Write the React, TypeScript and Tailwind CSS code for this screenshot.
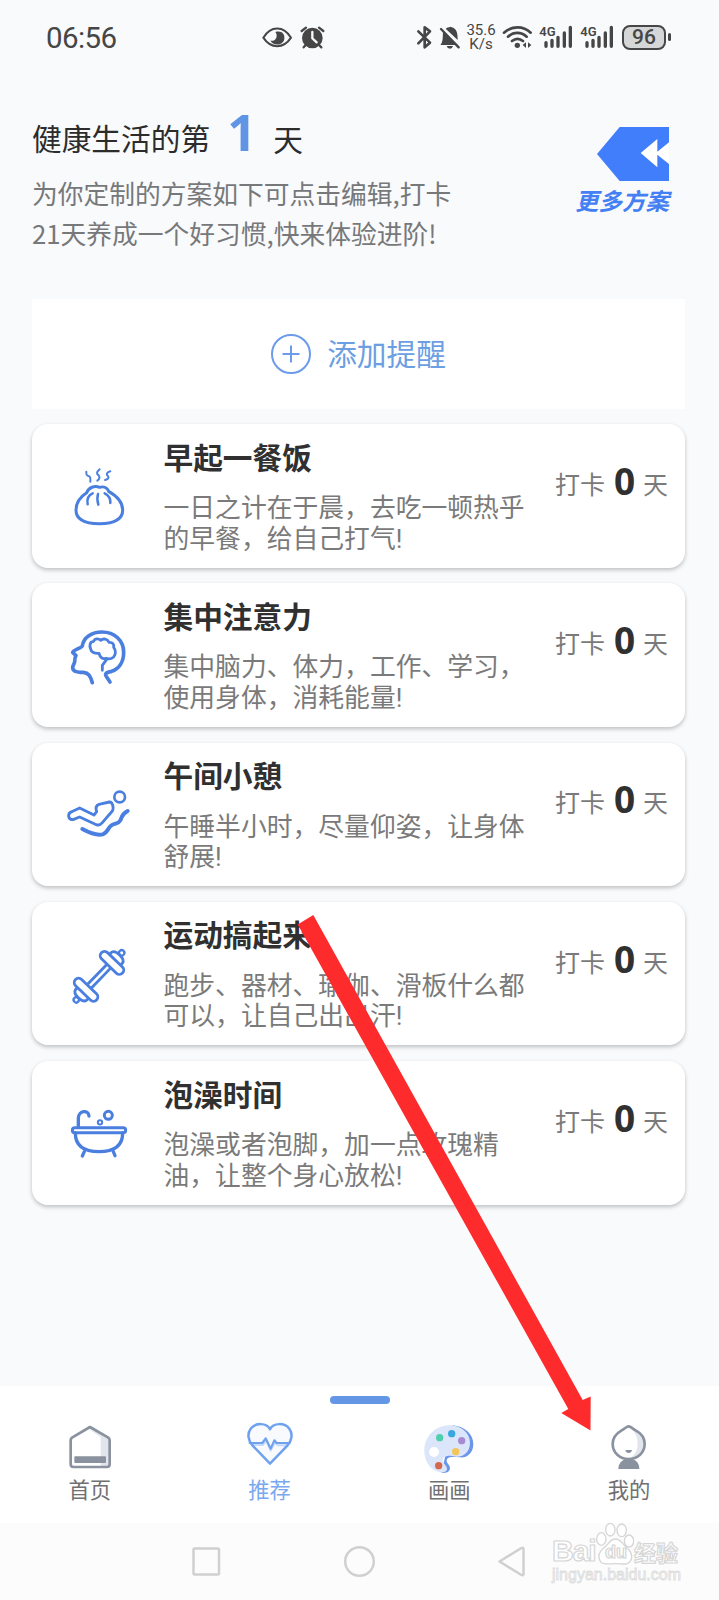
import type { ReactNode } from "react";

const plans = [
  {
    title: "早起一餐饭",
    lines: ["一日之计在于晨，去吃一顿热乎", "的早餐，给自己打气!"],
    days: 0,
    icon: <BunIcon />,
  },
  {
    title: "集中注意力",
    lines: ["集中脑力、体力，工作、学习，", "使用身体，消耗能量!"],
    days: 0,
    icon: <BrainIcon />,
  },
  {
    title: "午间小憩",
    lines: ["午睡半小时，尽量仰姿，让身体", "舒展!"],
    days: 0,
    icon: <NapIcon />,
  },
  {
    title: "运动搞起来",
    lines: ["跑步、器材、瑜伽、滑板什么都", "可以，让自己出出汗!"],
    days: 0,
    icon: <DumbbellIcon />,
  },
  {
    title: "泡澡时间",
    lines: ["泡澡或者泡脚，加一点玫瑰精", "油，让整个身心放松!"],
    days: 0,
    icon: <BathIcon />,
  },
];

const tabs = [
  { label: "首页", icon: <HomeIcon />, active: false },
  { label: "推荐", icon: <HeartIcon />, active: true },
  { label: "画画", icon: <PaletteIcon />, active: false },
  { label: "我的", icon: <ProfileIcon />, active: false },
];

function PlanIcon({ viewBox, children }: { viewBox: string; children: ReactNode }) {
  return (
    <svg
      className="h-16 w-16 shrink-0"
      viewBox={viewBox}
      fill="none"
      stroke="#4a7fe0"
      strokeWidth="9"
      strokeLinecap="round"
      strokeLinejoin="round"
    >
      {children}
    </svg>
  );
}

function BunIcon() {
  return (
    <PlanIcon viewBox="201 552 192 192">
      <path d="M260 638C238 652 228 670 228 690C228 718 252 731 298 731C344 731 368 718 368 690C368 670 354 650 326 634C322 624 312 618 299 622C284 616 266 622 260 638Z" />
      <path d="M278 640C264 646 260 658 263 673M294 642C291 652 292 664 295 674M314 640C326 646 332 656 331 669" strokeWidth="7.500" />
      <path d="M259 575C258 588 262 587 268 589C273 592 271 598 271 605M299 568C288 577 290 582 296 586C300 591 299 597 292 602M331 574C319 577 318 584 324 588C328 594 323 598 315 600" strokeWidth="6" />
    </PlanIcon>
  );
}

function BrainIcon() {
  return (
    <PlanIcon viewBox="81 39 192 192">
      <path d="M157 218C151 196 145 189 130 187C113 187 98 184 98 173C98 167 103 162 104 155C104 148 104 142 108 137L98 127C97 121 124 114 127 108C130 82 156 66 186 66C224 66 251 92 251 127C251 157 236 177 215 184C195 188 194 193 200 201L210 216" strokeWidth="11" />
      <path d="M177 130C164 131 153 126 152 117C148 107 149 95 160 95C165 84 176 85 182 91C190 84 203 87 207 97C218 96 223 103 221 112C228 120 228 134 221 141C213 148 203 147 198 145C189 148 180 145 177 130ZM200 148L187 166V181" strokeWidth="8.500" />
    </PlanIcon>
  );
}

function NapIcon() {
  return (
    <PlanIcon viewBox="81 37 192 192">
      <circle cx="239" cy="82" r="16" strokeWidth="8" />
      <path d="M170 126L162 136L119 115L95 126C81 132 84 150 99 150L119 142L169 165C176 168 182 165 187 159L217 124C222 115 218 96 208 97L177 104C168 107 166 114 170 126Z" strokeWidth="8.500" />
      <path d="M127 178C151 191 171 198 188 194C206 188 202 173 216 166C228 160 235 163 241 152C247 141 244 134 263 124" strokeWidth="12" />
    </PlanIcon>
  );
}

function DumbbellIcon() {
  return (
    <PlanIcon viewBox="81 35 192 192">
      <g transform="translate(177 138) rotate(-46)" strokeWidth="8.500">
        <path d="M-42 -8H42M-42 8H42" />
        <path d="M-68 -23H-78C-93 -20 -93 20 -78 23H-68M68 -23H78C93 -20 93 20 78 23H68" />
        <rect x="-69" y="-44" width="26" height="88" rx="13" fill="#fff" />
        <rect x="43" y="-44" width="26" height="88" rx="13" fill="#fff" />
        <circle cx="-98" cy="0" r="8" strokeWidth="7" />
        <circle cx="98" cy="0" r="8" strokeWidth="7" />
      </g>
    </PlanIcon>
  );
}

function BathIcon() {
  return (
    <PlanIcon viewBox="81 32 192 192">
      <rect x="97" y="112" width="160" height="15" rx="7.500" />
      <path d="M106 128C106 166 132 184 177 184C222 184 248 166 248 128M115 108V84C115 59 147 58 147 77M133 184L127 197M220 184L225 196" strokeWidth="10" />
      <circle cx="205" cy="75" r="12" />
      <circle cx="180" cy="96" r="6.500" strokeWidth="6" />
    </PlanIcon>
  );
}

function HomeIcon() {
  return (
    <svg className="h-[54px] w-[54px]" viewBox="187 150 162 162" fill="none">
      <path d="M300 188L327 207V288H300Z" fill="#e2e6ec" />
      <path d="M260 173L268 173L300 193V202Z" fill="#e2e6ec" />
      <path d="M268 171L323 203Q327 206 327 211V283Q327 291 319 291H218Q210 291 210 283V211Q210 206 214 203Z" stroke="#8a929f" strokeWidth="8" strokeLinejoin="round" />
      <rect x="221" y="259" width="95" height="20" rx="3" fill="#8a929f" />
    </svg>
  );
}

function HeartIcon() {
  return (
    <svg className="h-[54px] w-[54px]" viewBox="728 150 162 162" fill="none" strokeLinejoin="round" strokeLinecap="round">
      <path d="M809 178C799 157 765 158 751 176C740 191 743 211 757 227L809 281L861 227C875 211 878 191 867 176C853 158 819 157 809 178Z" fill="#f8fafe" />
      <path d="M754 225H788L797 211L811 242L824 217L832 226H861" stroke="#c6dafa" strokeWidth="6" />
      <path d="M809 178C799 157 765 158 751 176C740 191 743 211 757 227L809 281L861 227C875 211 878 191 867 176C853 158 819 157 809 178Z" stroke="#6fa1ef" strokeWidth="7.500" />
      <path d="M748 219H786L796 205L811 236L822 211L829 219H868" stroke="#6fa1ef" strokeWidth="6.500" />
    </svg>
  );
}

function PaletteIcon() {
  return (
    <svg className="h-[54px] w-[54px]" viewBox="188 150 162 162">
      <path d="M280 166C318 170 342 192 342 224C341 250 322 265 300 262C280 258 264 261 262 270C261 280 272 284 272 295C271 306 260 311 246 308Z" fill="#6c96e8" />
      <path d="M268 166C300 164 331 185 332 218C332 246 313 260 292 260C272 255 253 256 250 269C249 281 264 286 263 298C261 309 246 309 233 304C209 295 194 270 195 239C197 196 230 167 268 166Z" fill="#dbe6fb" />
      <circle cx="224" cy="246" r="15" fill="#fff" />
      <circle cx="241" cy="203" r="11" fill="#4fcfae" />
      <circle cx="277" cy="191" r="11" fill="#38a7dd" />
      <circle cx="307" cy="212" r="11" fill="#a78bd2" />
      <circle cx="289" cy="245" r="11" fill="#f3c558" />
      <circle cx="238" cy="287" r="11" fill="#d4694d" />
    </svg>
  );
}

function ProfileIcon() {
  return (
    <svg className="h-[54px] w-[54px]" viewBox="725 150 162 162" fill="none">
      <path d="M774 297C774 281 785 270 796 267H815C828 270 837 281 837 297Z" fill="#8a929f" />
      <path d="M805 169C811 169 816 175 826 181C843 190 853 204 853 222C853 248 832 267 805 267C778 267 757 248 757 222C757 204 768 190 784 181C795 175 799 169 805 169Z" fill="#fff" />
      <path d="M807 172C826 188 832 202 832 220C832 244 823 257 808 264C834 266 851 246 851 222C851 195 831 187 807 172Z" fill="#e2e6ec" />
      <path d="M805 169C811 169 816 175 826 181C843 190 853 204 853 222C853 248 832 267 805 267C778 267 757 248 757 222C757 204 768 190 784 181C795 175 799 169 805 169Z" stroke="#8a929f" strokeWidth="8" />
      <path d="M795 240H815Q813 249 805 249Q797 249 795 240Z" fill="#8a929f" />
    </svg>
  );
}

function Signal() {
  return (
    <svg className="h-[26px] w-[34px]" viewBox="537 72 102 78">
      <text x="538" y="109" fontFamily="Roboto, sans-serif" fontSize="41" fontWeight="600" fill="#464646" textLength="49" lengthAdjust="spacingAndGlyphs">4G</text>
      <g stroke="#464646" strokeWidth="10" strokeLinecap="round">
        <path d="M558 128V139M576 121V139M594 112V139M613 99V139M631 82V139" />
      </g>
    </svg>
  );
}

function StatusBar() {
  return (
    <div className="flex h-[74px] items-center pl-[46px] text-[#464646]">
      <span className="w-[216px] translate-y-[2px] font-[Roboto,sans-serif] text-[29.500px] leading-none tracking-[-0.600px]">06:56</span>
      <svg className="h-[26px] w-[64px]" viewBox="786 72 192 78" fill="none">
        <path d="M790 113C812 76 851 76 873 113C851 147 812 147 790 113Z" stroke="#464646" strokeWidth="6" />
        <path d="M826 96C846 91 855 103 853 117C850 137 819 140 811 121C817 125 826 121 829 113C831 106 830 101 826 96Z" fill="#464646" />
        <circle cx="937" cy="114" r="31" fill="#464646" />
        <path d="M905 93L918 83M957 83L970 93M917 135L911 142M957 135L964 142" stroke="#464646" strokeWidth="7" strokeLinecap="round" />
        <path d="M937 96V115L950 127" stroke="#f9fafc" strokeWidth="7" strokeLinecap="round" />
      </svg>
      <svg className="ml-[90px] h-[26px] w-[46px]" viewBox="168 72 138 78" fill="none">
        <path d="M175 94L210 128L194 142V82L210 94L175 130" stroke="#464646" strokeWidth="8" strokeLinecap="round" strokeLinejoin="round" />
        <path d="M249 95L293 135H241C250 124 248 110 249 95Z" fill="#464646" />
        <path d="M257 86Q263 82 268 82Q270 78 276 82C291 87 293 100 293 120Z" fill="#464646" />
        <path d="M243 87L296 142" stroke="#464646" strokeWidth="7" strokeLinecap="round" />
        <path d="M260 138H279Q277 146 270 146Q262 146 260 138Z" fill="#464646" />
      </svg>
      <div className="ml-[3px] flex w-[32px] flex-col items-center font-[Roboto,sans-serif] text-[15px] leading-[14px]">
        <span>35.6</span>
        <span>K/s</span>
      </div>
      <svg className="ml-[5px] h-[26px] w-[32px]" viewBox="424 72 96 78" fill="none">
        <path d="M430 98C453 77 488 77 510 98M442 110C459 95 481 95 498 110M454 123C464 115 477 115 487 123" stroke="#464646" strokeWidth="8" strokeLinecap="round" />
        <circle cx="470" cy="136" r="8" fill="#464646" />
        <path d="M486 135L496 127V144ZM512 135L502 127V144Z" fill="#464646" />
      </svg>
      <div className="ml-[5px] flex gap-[7px]">
        <Signal />
        <Signal />
      </div>
      <div className="ml-[8px] flex h-[25px] w-[44px] items-center justify-center rounded-[8px] border-2 border-[#464646] bg-[#d5d6d8] font-[Roboto,sans-serif] text-[21px] font-medium leading-none">
        96
      </div>
      <div className="ml-[2px] h-[8px] w-[3px] rounded-sm bg-[#464646]" />
    </div>
  );
}

function Header() {
  return (
    <header className="flex h-[225px] justify-between pl-8 pr-[50px]">
      <div>
        <div className="mt-[33px] flex h-[62px] items-center text-[29.700px] leading-[62px] text-[#2c2c2c]">
          <span>健康生活的第</span>
          <span className="ml-[17px] w-[46px] -translate-y-[7px] font-[Noto_Sans,sans-serif] text-[51px] font-bold text-[#6095e6]">1</span>
          <span className="translate-y-px">天</span>
        </div>
        <p className="mt-[4px] whitespace-nowrap text-[25.750px] leading-[40px] text-[#76787a]">
          为你定制的方案如下可点击编辑,打卡
          <br />
          21天养成一个好习惯,快来体验进阶!
        </p>
      </div>
      <div className="mt-[53px] flex w-[94px] flex-col items-end">
        <svg className="h-[54px] w-[72px]" viewBox="710 380 216 162">
          <path d="M778 380H926V542H778L710 461Z" fill="#417efb" />
          <path d="M841 458L891 416V454L926 426V491L891 463V501Z" fill="#fff" />
        </svg>
        <span className="mt-[3px] whitespace-nowrap text-[23.500px] font-bold italic leading-[32px] text-[#4480f3]">更多方案</span>
      </div>
    </header>
  );
}

function PlanCard({ title, lines, days, icon }: (typeof plans)[number]) {
  return (
    <div className="flex h-[143.500px] items-center rounded-2xl bg-white pl-[35px] pr-[15px] shadow-[0_2px_4px_rgba(0,0,0,0.24)]">
      {icon}
      <div className="ml-[32.500px] w-[391.500px] self-start pt-[12.500px]">
        <h2 className="text-[29.700px] font-bold leading-[40px] text-[#303030]">{title}</h2>
        <p className="mt-[16.500px] whitespace-nowrap font-[Roboto,Noto_Sans_CJK_SC,sans-serif] text-[25.800px] leading-[30.600px] text-[#7a7a7a]">
          {lines[0]}
          <br />
          {lines[1]}
        </p>
      </div>
      <div className="flex -translate-y-[13px] items-center whitespace-nowrap text-[25px] leading-[40px] text-[#7a7a7a]">
        <span>打卡</span>
        <span className="mx-[8px] w-[22px] translate-x-[0.500px] -translate-y-[2px] text-center font-[Noto_Sans,sans-serif] text-[37px] font-bold text-[#303030]">{days}</span>
        <span>天</span>
      </div>
    </div>
  );
}

function TabBar() {
  return (
    <nav className="h-[137px] bg-white pt-[10px]">
      <div className="mx-auto h-2 w-[60px] rounded-full bg-[#6397e6]" />
      <div className="mt-4 grid grid-cols-4">
        {tabs.map((tab) => (
          <div key={tab.label} className="flex flex-col items-center">
            {tab.icon}
            <span className={tab.active ? "text-[21.300px] leading-[30px] text-[#7aa8f0]" : "text-[21.300px] leading-[30px] text-[#707070]"}>
              {tab.label}
            </span>
          </div>
        ))}
      </div>
    </nav>
  );
}

function SystemNav() {
  return (
    <div className="relative h-[77px] bg-[#fcfcfc]">
      <svg className="h-[77px] w-full" viewBox="0 0 719 77" fill="none" stroke="#d0d0d0" strokeWidth="2.500" strokeLinejoin="round">
        <rect x="193.500" y="25.500" width="25.500" height="26" rx="1" />
        <circle cx="359.500" cy="38.500" r="14.300" />
        <path d="M499.500 38.500L521.500 25Q523.500 24 523.500 26V51Q523.500 53 521.500 52Z" />
      </svg>
      {/* Watermark */}
      <div className="absolute left-[552px] top-[-3px] font-[Liberation_Sans,sans-serif] font-bold leading-none text-white">
        <div className="flex h-[46px] items-end">
          <span className="w-[44px] text-[30px] tracking-[-1px] [-webkit-text-stroke:1.200px_#d6d6d6]">Bai</span>
          <div className="relative h-[44px] w-[38px]">
            <svg className="h-[44px] w-[38px]" viewBox="704 454 114 132" fill="#fff" stroke="#d6d6d6" strokeWidth="4">
              <ellipse cx="720" cy="505" rx="14" ry="19" />
              <ellipse cx="747" cy="477" rx="14" ry="19" />
              <ellipse cx="781" cy="479" rx="14" ry="19" />
              <ellipse cx="803" cy="511" rx="14" ry="18" />
              <path d="M762 505C746 505 744 519 730 530C713 543 710 558 716 570C722 584 739 579 762 579C785 579 799 585 808 570C814 558 810 543 796 531C782 519 779 505 762 505Z" />
            </svg>
            <span className="absolute left-[9px] top-[21px] text-[18px] [-webkit-text-stroke:1.200px_#d6d6d6]">du</span>
          </div>
          <span className="whitespace-nowrap pb-[4px] font-[Noto_Sans_CJK_SC,sans-serif] text-[22px] [-webkit-text-stroke:1.200px_#d6d6d6]">经验</span>
        </div>
        <div className="mt-px text-[16px] font-normal text-[#f7f7f7] [-webkit-text-stroke:0.800px_#dcdcdc]">jingyan.baidu.com</div>
      </div>
    </div>
  );
}

export default function App() {
  return (
    <div className="relative flex h-[1600px] w-[719px] flex-col overflow-hidden bg-[#f9fafc] font-[Noto_Sans_CJK_SC,sans-serif]">
      <StatusBar />
      <Header />
      <main className="flex-1 pl-8 pr-[34px]">
        <button className="flex h-[110px] w-full items-center justify-center gap-4 bg-white text-[29.700px] leading-[40px] text-[#6c9ee2]">
          <svg className="h-10 w-10" viewBox="0 0 40 40" fill="none" stroke="#6b9bea" strokeWidth="2">
            <circle cx="20" cy="20" r="19" />
            <path d="M20 11.500V28.500M11.500 20H28.500" />
          </svg>
          <span className="-translate-y-px">添加提醒</span>
        </button>
        <div className="mt-[15.300px] flex flex-col gap-[15.700px]">
          {plans.map((plan) => (
            <PlanCard key={plan.title} {...plan} />
          ))}
        </div>
      </main>
      <TabBar />
      <SystemNav />

      {/* Arrow pointing to the profile tab */}
      <svg className="pointer-events-none absolute left-0 top-0 h-full w-full" viewBox="0 0 719 1600">
        <path d="M297.700 924.500L313.300 915L582.700 1400L590.700 1396.500L590.500 1430.500L561.300 1413L568.300 1409Z" fill="#fe2b2d" />
      </svg>
    </div>
  );
}
